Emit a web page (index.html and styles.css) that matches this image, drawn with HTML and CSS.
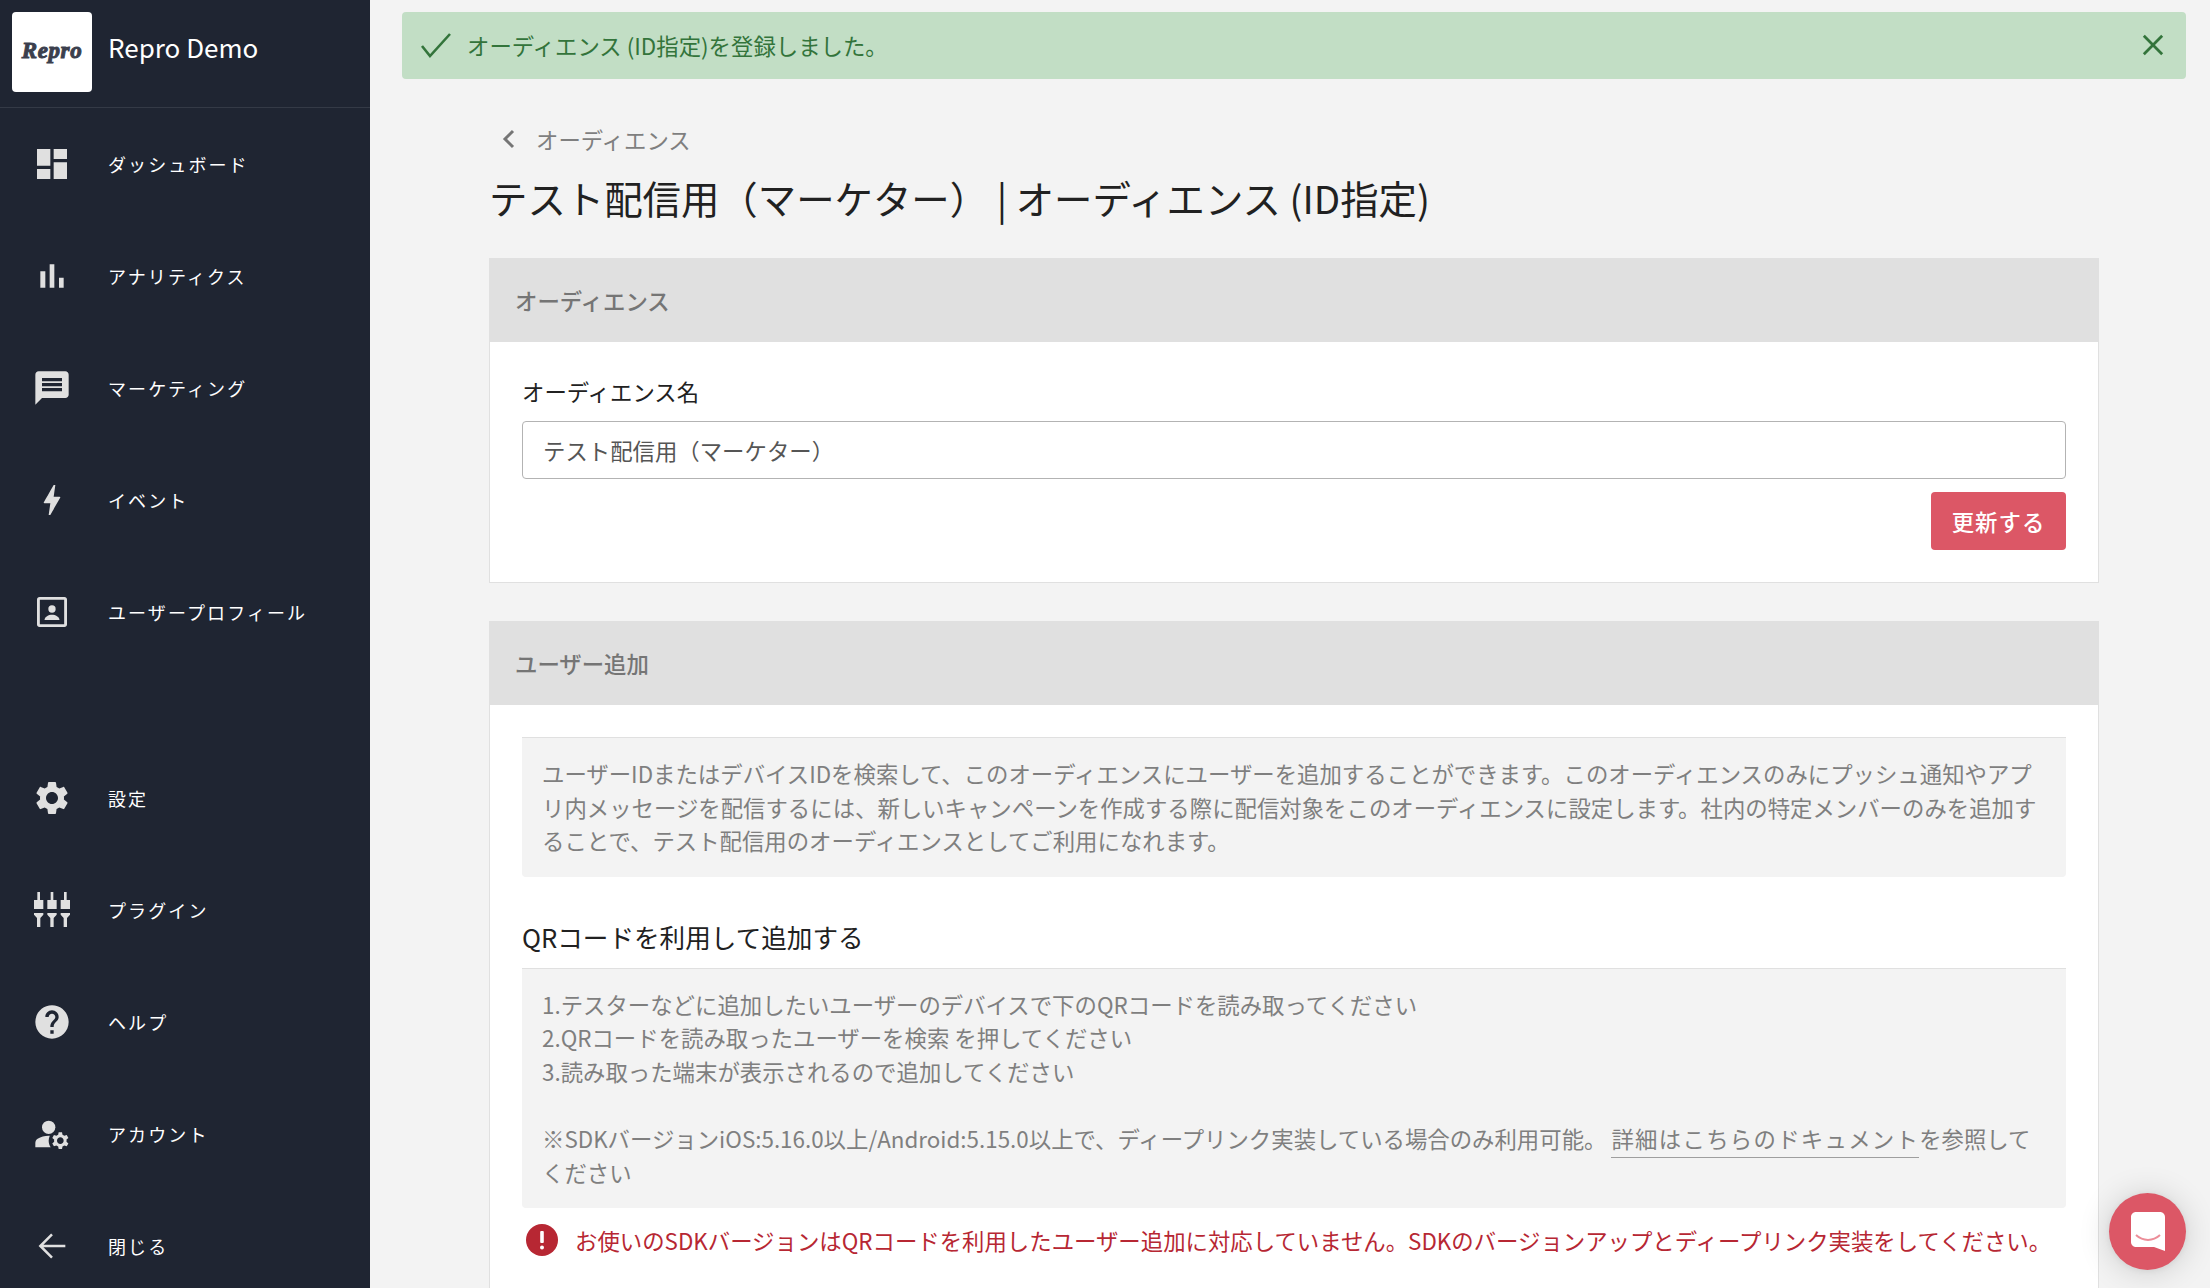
FILE: index.html
```html
<!DOCTYPE html>
<html lang="ja">
<head>
<meta charset="utf-8">
<title>Repro Demo</title>
<link rel="stylesheet" href="styles.css">
</head>
<body>
<aside class="sidebar">
  <div class="brand">
    <div class="brand-logo"><span>Repro</span></div>
    <div class="brand-name">Repro Demo</div>
  </div>
  <nav class="nav">
    <a class="nav-item"><svg class="nav-icon" viewBox="0 0 24 24"><path d="M3 13h8V3H3v10zm0 8h8v-6H3v6zm10 0h8V11h-8v10zm0-18v6h8V3h-8z"/></svg><span>ダッシュボード</span></a>
    <a class="nav-item"><svg class="nav-icon" viewBox="0 0 24 24"><path d="M5 9.2h3V19H5zM10.6 5h2.8v14h-2.8zm5.6 8H19v6h-2.8z"/></svg><span>アナリティクス</span></a>
    <a class="nav-item"><svg class="nav-icon" viewBox="0 0 24 24"><path d="M20 2H4c-1.1 0-1.99.9-1.99 2L2 22l4-4h14c1.1 0 2-.9 2-2V4c0-1.1-.9-2-2-2zm-2 12H6v-2h12v2zm0-3H6V9h12v2zm0-3H6V6h12v2z"/></svg><span>マーケティング</span></a>
    <a class="nav-item"><svg class="nav-icon" viewBox="0 0 24 24"><path d="M11 21h-1l1-7H7.5c-.58 0-.57-.32-.38-.66.19-.34.05-.08.07-.12C8.48 10.94 10.42 7.54 13 3h1l-1 7h3.5c.49 0 .56.33.47.51l-.07.15C12.96 17.55 11 21 11 21z"/></svg><span>イベント</span></a>
    <a class="nav-item"><svg class="nav-icon" viewBox="0 0 24 24"><path fill-rule="evenodd" d="M4.500 3h15c.83 0 1.500.67 1.500 1.500v15c0 .83-.67 1.500-1.500 1.500h-15c-.83 0-1.500-.67-1.500-1.500v-15C3 3.670 3.670 3 4.500 3zm.2 1.700v14.600h14.600V4.700H4.700z"/><circle cx="12" cy="10.200" r="2.200"/><path d="M7.500 16.800c0-2 2.500-3.200 4.500-3.200s4.500 1.200 4.500 3.200z"/></svg><span>ユーザープロフィール</span></a>
    <div class="nav-gap"></div>
    <a class="nav-item"><svg class="nav-icon" viewBox="0 0 24 24"><path d="M19.14 12.94c.04-.3.06-.61.06-.94 0-.32-.02-.64-.07-.94l2.03-1.58c.18-.14.23-.41.12-.61l-1.92-3.32c-.12-.22-.37-.29-.59-.22l-2.39.96c-.5-.38-1.03-.7-1.62-.94l-.36-2.54c-.04-.24-.24-.41-.48-.41h-3.84c-.24 0-.43.17-.47.41l-.36 2.54c-.59.24-1.13.57-1.62.94l-2.39-.96c-.22-.08-.47 0-.59.22L2.74 8.87c-.12.21-.08.47.12.61l2.03 1.58c-.05.3-.09.63-.09.94s.02.64.07.94l-2.03 1.58c-.18.14-.23.41-.12.61l1.92 3.32c.12.22.37.29.59.22l2.39-.96c.5.38 1.03.7 1.62.94l.36 2.54c.05.24.24.41.48.41h3.84c.24 0 .44-.17.47-.41l.36-2.54c.59-.24 1.13-.56 1.62-.94l2.39.96c.22.08.47 0 .59-.22l1.92-3.32c.12-.22.07-.47-.12-.61l-2.01-1.58zM12 15.6c-1.98 0-3.6-1.62-3.6-3.6s1.62-3.6 3.6-3.6 3.6 1.62 3.6 3.6-1.62 3.6-3.6 3.6z"/></svg><span>設定</span></a>
    <a class="nav-item"><svg class="nav-icon" viewBox="0 0 24 24"><path d="M3.200 1.200h1.600V6h2v5.400H1.200V6h2zM11.200 1.200h1.600V6h2v5.400H9.200V6h2zM19.200 1.200h1.600V6h2v5.400h-5.600V6h2zM1.200 13.800h5.600v1l-1.800 2v5.400H3v-5.400l-1.800-2zM9.200 13.800h5.600v1l-1.800 2v5.400h-2v-5.400l-1.800-2zM17.200 13.800h5.600v1l-1.800 2v5.400h-2v-5.400l-1.800-2z"/></svg><span>プラグイン</span></a>
    <a class="nav-item"><svg class="nav-icon" viewBox="0 0 24 24"><path d="M12 2C6.48 2 2 6.48 2 12s4.48 10 10 10 10-4.48 10-10S17.52 2 12 2zm1 17h-2v-2h2v2zm2.07-7.750l-.9.92C13.45 12.9 13 13.500 13 15h-2v-.5c0-1.100.45-2.100 1.170-2.830l1.240-1.260c.37-.36.59-.86.59-1.410 0-1.100-.9-2-2-2s-2 .9-2 2H8c0-2.210 1.790-4 4-4s4 1.790 4 4c0 .88-.36 1.680-.93 2.250z"/></svg><span>ヘルプ</span></a>
    <a class="nav-item"><svg class="nav-icon" viewBox="0 0 24 24"><circle cx="10" cy="8" r="4"/><path d="M10.670 13.020C10.450 13.010 10.230 13 10 13c-2.420 0-4.680.67-6.610 1.820C2.510 15.340 2 16.320 2 17.350V20h9.260C10.470 18.870 10 17.490 10 16c0-1.070.25-2.070.67-2.980z"/><path d="M20.750 16c0-.22-.03-.42-.06-.63l1.140-1.010-1-1.730-1.450.49c-.32-.27-.68-.48-1.080-.63L18 11h-2l-.3 1.490c-.4.15-.76.36-1.080.63l-1.450-.49-1 1.730 1.140 1.010c-.03.21-.06.41-.06.63s.03.42.06.63l-1.140 1.010 1 1.730 1.450-.49c.32.27.68.48 1.080.63L16 21h2l.3-1.490c.4-.15.76-.36 1.080-.63l1.450.49 1-1.730-1.140-1.010c.03-.21.06-.41.06-.63zM17 18c-1.100 0-2-.9-2-2s.9-2 2-2 2 .9 2 2-.9 2-2 2z"/></svg><span>アカウント</span></a>
    <a class="nav-item"><svg class="nav-icon nav-icon-line" viewBox="0 0 24 24"><path d="M20 12H5M12 5l-7 7 7 7"/></svg><span>閉じる</span></a>
  </nav>
</aside>
<main class="main">
  <div class="alert">
    <svg class="alert-check" viewBox="0 0 32 32"><path d="M2 17l8 10L30 5"/></svg>
    <span class="alert-text">オーディエンス (ID指定)を登録しました。</span>
    <svg class="alert-close" viewBox="0 0 24 24"><path d="M2 2l20 20M22 2L2 22"/></svg>
  </div>
  <div class="content">
    <a class="back"><svg class="back-icon" viewBox="0 0 14 20"><path d="M11 2L3 10l8 8"/></svg><span>オーディエンス</span></a>
    <h1 class="title">テスト配信用（マーケター） | オーディエンス (ID指定)</h1>
    <section class="card">
      <h2 class="card-head">オーディエンス</h2>
      <div class="card-body">
        <label class="field-label">オーディエンス名</label>
        <div class="input">テスト配信用（マーケター）</div>
        <div class="actions"><button class="btn">更新する</button></div>
      </div>
    </section>
    <section class="card">
      <h2 class="card-head">ユーザー追加</h2>
      <div class="card-body card-body-tall">
        <div class="note">ユーザーIDまたはデバイスIDを検索して、このオーディエンスにユーザーを追加することができます。このオーディエンスのみにプッシュ通知やアプリ内メッセージを配信するには、新しいキャンペーンを作成する際に配信対象をこのオーディエンスに設定します。社内の特定メンバーのみを追加することで、テスト配信用のオーディエンスとしてご利用になれます。</div>
        <h3 class="sub-title">QRコードを利用して追加する</h3>
        <div class="note">1.テスターなどに追加したいユーザーのデバイスで下のQRコードを読み取ってください<br>2.QRコードを読み取ったユーザーを検索 を押してください<br>3.読み取った端末が表示されるので追加してください<br><br>※SDKバージョンiOS:5.16.0以上/Android:5.15.0以上で、ディープリンク実装している場合のみ利用可能。 <a class="doc-link">詳細はこちらのドキュメント</a>を参照してください</div>
        <div class="error">
          <svg class="error-icon" viewBox="0 0 32 32"><circle cx="16" cy="16" r="16"/><rect class="error-mark" x="14.200" y="7" width="3.600" height="12" rx="1"/><circle class="error-mark" cx="16" cy="23.500" r="2"/></svg>
          <span>お使いのSDKバージョンはQRコードを利用したユーザー追加に対応していません。SDKのバージョンアップとディープリンク実装をしてください。</span>
        </div>
      </div>
    </section>
  </div>
  <div class="launcher">
    <svg class="launcher-icon" viewBox="0 0 34 39"><path d="M5 0h24c2.800 0 5 2.200 5 5v34l-11-4H5c-2.800 0-5-2.200-5-5V5c0-2.800 2.200-5 5-5z"/><path class="launcher-smile" d="M5 23c7 6.500 17 6.500 24 0"/></svg>
  </div>
</main>
</body>
</html>
```

FILE: styles.css
```css
* { box-sizing: border-box; }
html, body { height: 100%; }
body {
  margin: 0;
  height: 1288px;
  display: flex;
  overflow: hidden;
  background: #f3f3f3;
  font-family: "Noto Sans CJK JP", "Noto Sans", sans-serif;
  color: #757575;
}
.sidebar {
  width: 370px;
  flex: none;
  height: 1288px;
  overflow: hidden;
  background: #1f2532;
}
.brand {
  height: 108px;
  display: flex;
  align-items: flex-start;
  gap: 16px;
  padding: 12px;
  border-bottom: 1px solid #343a46;
}
.brand-logo {
  width: 80px;
  height: 80px;
  background: #fff;
  border-radius: 4px;
  display: flex;
  align-items: center;
  justify-content: center;
}
.brand-logo span {
  font-family: "Liberation Serif", serif;
  font-weight: 700;
  font-style: italic;
  font-size: 23px;
  line-height: 30px;
  letter-spacing: 0.6px;
  margin-top: -3px;
  color: #3b3f4d;
  -webkit-text-stroke: 1px #3b3f4d;
}
.brand-name {
  font-size: 26px;
  line-height: 36px;
  margin-top: 17px;
  color: #fff;
}
.nav { display: flex; flex-direction: column; }
.nav-item {
  height: 112px;
  flex: none;
  display: flex;
  align-items: center;
  gap: 36px;
  padding-left: 32px;
  font-size: 18px;
  letter-spacing: 2.1px;
  color: #fff;
}
.nav-icon { width: 40px; height: 40px; fill: #e0e0e0; flex: none; }
.nav-icon-line { fill: none; stroke: #e0e0e0; stroke-width: 1.5; }
.nav-gap { height: 74px; flex: none; }
.main { flex: 1; min-width: 0; position: relative; height: 1288px; overflow: hidden; }
.alert {
  height: 67px;
  margin: 12px 24px 0 32px;
  padding: 0 22px 0 18px;
  display: flex;
  align-items: center;
  border-radius: 4px;
  background: #c2dec5;
  color: #33743b;
  font-size: 22.4px;
}
.alert-check { width: 32px; height: 32px; fill: none; stroke: #33743b; stroke-width: 2.6; flex: none; margin: -2px 15px 0 0; }
.alert-text { flex: 1; margin-top: -2px; }
.alert-close { width: 22px; height: 22px; fill: none; stroke: #33743b; stroke-width: 3; flex: none; margin-top: -2px; }
.content { padding: 0 111px 0 119px; }
.back {
  display: flex;
  align-items: center;
  margin-top: 44px;
  padding-left: 13px;
  height: 32px;
  font-size: 22.4px;
  color: #7f7f7f;
}
.back-icon { width: 14px; height: 20px; fill: none; stroke: #757575; stroke-width: 3; margin-right: 20px; }
.title {
  margin: 15px 0 0;
  font-size: 38.4px;
  line-height: 54px;
  font-weight: 400;
  color: #212121;
}
.card {
  margin-top: 34px;
  background: #fff;
  border: 1px solid #e0e0e0;
  border-top: 0;
}
.card + .card { margin-top: 38px; }
.card-head {
  margin: 0 -1px;
  height: 84px;
  padding: 0 26px;
  display: flex;
  align-items: center;
  background: #e0e0e0;
  font-size: 22.4px;
  font-weight: 500;
  color: #757575;
}
.card-body { padding: 33px 32px 32px; }
.card-body-tall { height: 700px; padding-top: 32px; }
.field-label { display: block; font-size: 22.4px; line-height: 32px; color: #212121; }
.input {
  margin-top: 14px;
  height: 58px;
  padding: 0 20px;
  display: flex;
  align-items: center;
  border: 1px solid #b3b3b3;
  border-radius: 4px;
  font-size: 22.4px;
  color: #555;
}
.actions { display: flex; justify-content: flex-end; margin-top: 13px; }
.btn {
  height: 58px;
  width: 135px;
  border: 0;
  border-radius: 4px;
  background: #dc5766;
  color: #fff;
  font-family: inherit;
  font-size: 22.4px;
  font-weight: 500;
  letter-spacing: 1px;
}
.note {
  padding: 19px 20px;
  background: #f3f3f3;
  border-top: 1px solid #e0e0e0;
  border-radius: 0 0 4px 4px;
  font-size: 22.4px;
  line-height: 33.6px;
  color: #7f7f7f;
}
.doc-link { border-bottom: 1px solid #9e9e9e; padding-bottom: 3px; letter-spacing: 1.28px; }
.sub-title {
  margin: 41px 0 12px;
  font-size: 25.6px;
  line-height: 38px;
  font-weight: 400;
  color: #212121;
}
.error {
  display: flex;
  align-items: center;
  gap: 17px;
  margin-top: 16px;
  padding-left: 4px;
  font-size: 22.4px;
  line-height: 32px;
  color: #b72733;
}
.error-icon { width: 32px; height: 32px; fill: #b72733; flex: none; }
.error-mark { fill: #fff; }
.launcher {
  position: absolute;
  right: 24px;
  bottom: 18px;
  width: 77px;
  height: 77px;
  border-radius: 50%;
  background: #dc5766;
  box-shadow: 0 1px 6px rgba(0,0,0,.06), 0 2px 32px rgba(0,0,0,.16);
  display: flex;
  align-items: center;
  justify-content: center;
}
.launcher-icon { width: 34px; height: 39px; fill: #fff; }
.launcher-smile { fill: none; stroke: #ec8e99; stroke-width: 2; }
```
